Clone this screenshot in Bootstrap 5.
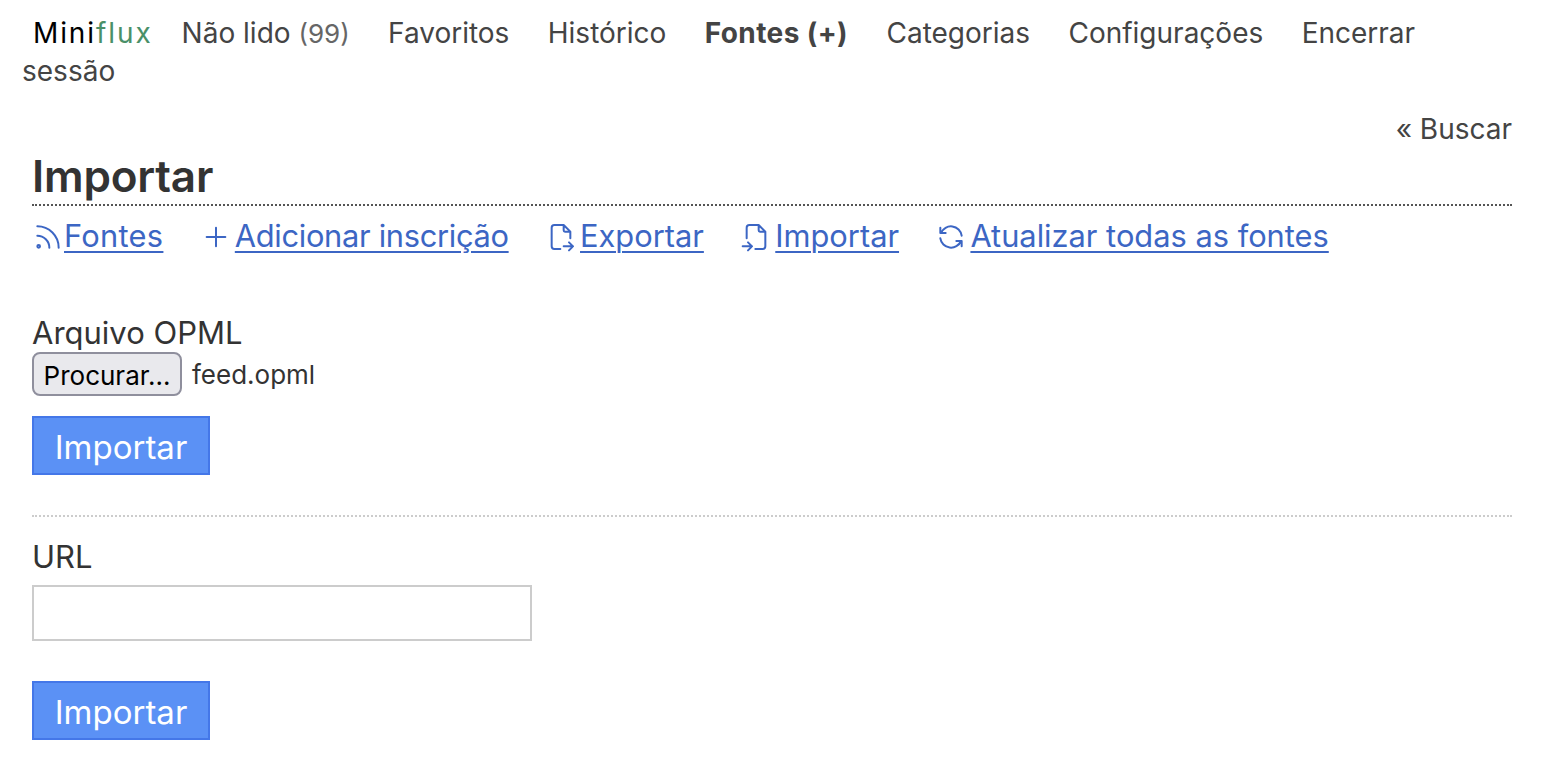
<!doctype html>
<html lang="pt-BR">
<head>
<meta charset="utf-8">
<title>Importar</title>
<link href="https://cdn.jsdelivr.net/npm/bootstrap@5.3.0/dist/css/bootstrap.min.css" rel="stylesheet">
<style>
html,body{height:100%}
body{font-family:Inter,"Liberation Sans",sans-serif;font-size:28px;color:#333;background:#fff;overflow:hidden;line-height:1.35}
.mf-header{padding:15px 22px 0 22px;font-size:28px;line-height:37.5px;color:#444}
.mf-header a{color:#444;text-decoration:none}
.mf-header a.mf-logo{color:#000;letter-spacing:1.9px;padding:0 11px;margin-right:18px}
.mf-logo b{font-weight:400;color:#4a9068}
.mf-header .mf-item{margin-right:30.5px}
.mf-header a.mf-active{font-weight:700;letter-spacing:.4px}
.mf-count{color:#666;font-size:26px}
.mf-main{padding:0 30px 0 32px}
.mf-search{text-align:right;font-size:28px;line-height:38px;margin-top:20px;color:#444}
.mf-title{font-size:44px;font-weight:600;letter-spacing:-.2px;line-height:56px;margin:0;border-bottom:2px dotted #555;color:#333}
.mf-sub{gap:36.4px;margin-top:10px;line-height:40px;font-size:30.8px}
.mf-sub a{color:#3c66c4;text-decoration:underline;text-decoration-thickness:2px;text-underline-offset:4px}
.mf-sub svg{width:32px;height:32px;margin-right:3px;vertical-align:-6px;fill:none;stroke:#3c66c4;stroke-width:1.5;stroke-linecap:round;stroke-linejoin:round}
.mf-sub span:first-child svg{margin-right:0}
.mf-sub span:first-child a{letter-spacing:.3px}
.mf-sub a.mf-tight{letter-spacing:-.3px}
.mf-label{display:block;font-size:31px;line-height:38px;margin:0}
.mf-label-top{margin-top:58px}
.mf-file{gap:10px;font-size:26px;height:44px}
.mf-file span{padding-top:2px}
.mf-browse{font:26px Inter,"Liberation Sans",sans-serif;color:#000;background:#e9e9ed;border:2px solid #8f8f9d;border-radius:8px;height:44px;width:150px;padding:2px 0 0}
.mf-btn{background:#5b91f5;border:2px solid #4477e8;color:#fff;font-size:33px;width:178px;height:59px;padding:3px 0 0;border-radius:0;line-height:1}
.mf-btn:hover{background:#5b91f5;color:#fff}
.mf-btn-a{margin-top:20px}
.mf-btn-b{margin-top:40px}
.mf-sep{border:0;border-top:2px dotted #ccc;opacity:1;margin:40px 0 21px}
.mf-input{display:block;width:500px;height:56px;border:2px solid #ccc;background:#fff;border-radius:0;padding:0 10px;margin-top:9px}
</style>
</head>
<body>
<header class="mf-header">
<a class="mf-logo" href="#">Mini<b>flux</b></a><a class="mf-item" href="#">Não lido <span class="mf-count">(99)</span></a> <a class="mf-item" href="#">Favoritos</a> <a class="mf-item" href="#">Histórico</a> <a class="mf-item mf-active" href="#">Fontes (+)</a> <a class="mf-item" href="#">Categorias</a> <a class="mf-item" href="#">Configurações</a> <a class="mf-item" href="#">Encerrar sessão</a>
</header>
<main class="mf-main">
<div class="mf-search">« Buscar</div>
<h1 class="mf-title">Importar</h1>
<nav class="d-flex mf-sub">
<span><svg viewBox="0 0 24 24"><path d="M4 19a1 1 0 1 0 2 0a1 1 0 1 0-2 0M4 4a16 16 0 0 1 16 16M4 11a9 9 0 0 1 9 9"/></svg><a href="#">Fontes</a></span>
<span><svg viewBox="0 0 24 24"><path d="M12 5v14M5 12h14"/></svg><a class="mf-tight" href="#">Adicionar inscrição</a></span>
<span><svg viewBox="0 0 24 24"><path d="M14 3v4a1 1 0 0 0 1 1h4M11.500 21h-4.500a2 2 0 0 1-2-2v-14a2 2 0 0 1 2-2h7l5 5v5m-5 6h7m-3-3l3 3l-3 3"/></svg><a href="#">Exportar</a></span>
<span><svg viewBox="0 0 24 24"><path d="M14 3v4a1 1 0 0 0 1 1h4M5 13v-8a2 2 0 0 1 2-2h7l5 5v11a2 2 0 0 1-2 2h-5.500m-9.500-2h7m-3-3l3 3l-3 3"/></svg><a href="#">Importar</a></span>
<span><svg viewBox="0 0 24 24"><path d="M20 11a8.100 8.100 0 0 0-15.500-2m-.5-4v4h4M4 13a8.100 8.100 0 0 0 15.500 2m.5 4v-4h-4"/></svg><a href="#">Atualizar todas as fontes</a></span>
</nav>
<form>
<label class="mf-label mf-label-top">Arquivo OPML</label>
<div class="d-flex align-items-center mf-file"><button type="button" class="mf-browse">Procurar...</button><span>feed.opml</span></div>
<button type="button" class="btn mf-btn d-block mf-btn-a">Importar</button>
</form>
<hr class="mf-sep">
<form>
<label class="mf-label">URL</label>
<input class="mf-input" type="text">
<button type="button" class="btn mf-btn d-block mf-btn-b">Importar</button>
</form>
</main>
</body>
</html>
